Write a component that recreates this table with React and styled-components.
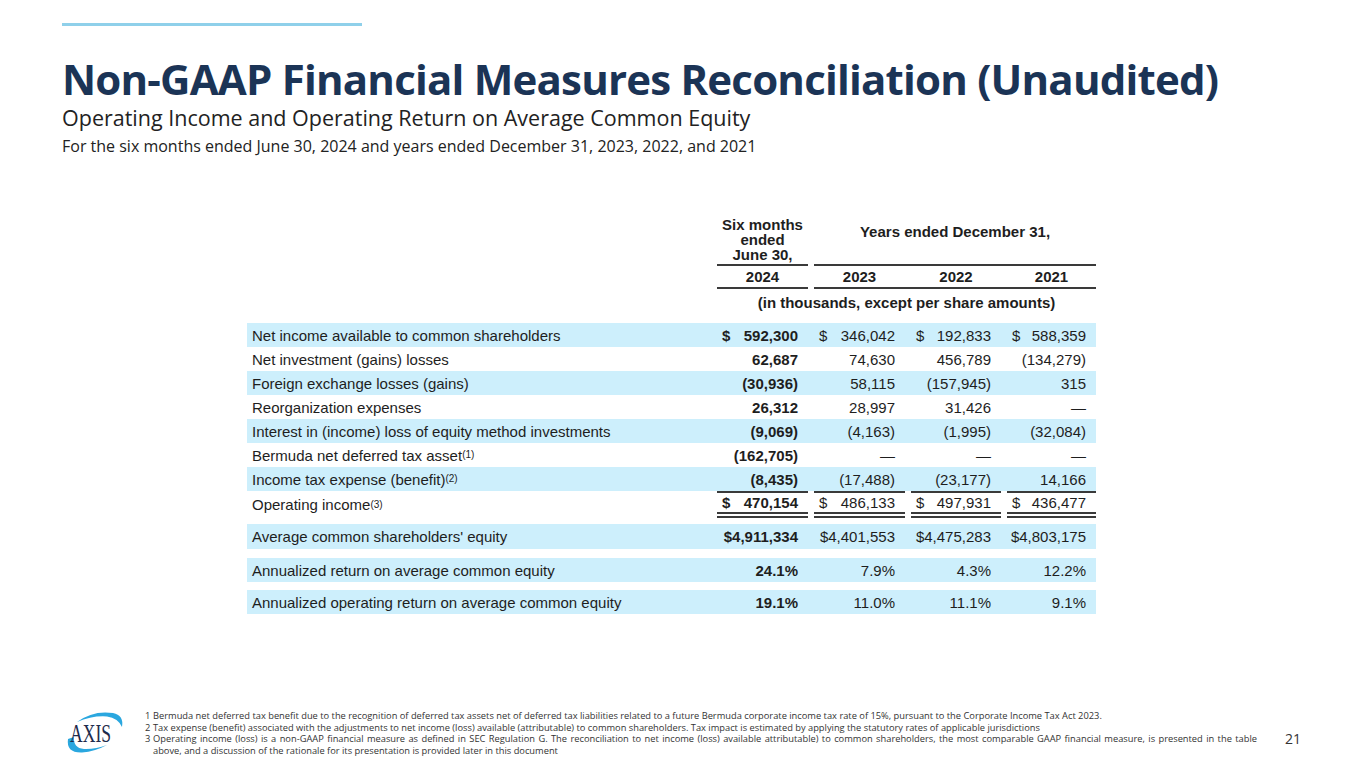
import React from 'react';
import styled, { createGlobalStyle } from 'styled-components';

const color = {
  navy: '#1b3456',
  rule: '#8fd0ea',
  band: '#cdeffc',
  ink: '#1e1e1e',
  line: '#3a3a3a',
  note: '#333333',
  logoBlue: '#2aa7df',
};

const GlobalStyle = createGlobalStyle`
  body {
    margin: 0;
    background: #fff;
  }
`;

const Page = styled.div`
  width: 1365px;
  height: 768px;
  box-sizing: border-box;
  display: flex;
  flex-direction: column;
  padding: 23px 0 0 62px;
  font-family: "Open Sans", "Noto Sans", sans-serif;
  overflow: hidden;
`;

const TopRule = styled.div`
  width: 300px;
  height: 3px;
  background: ${color.rule};
`;

const Title = styled.h1`
  margin: 27px 0 0;
  font-size: 42px;
  line-height: 52px;
  letter-spacing: -0.8px;
  font-weight: 700;
  color: ${color.navy};
  white-space: nowrap;
`;

const Subtitle = styled.h2`
  margin: 0;
  font-size: 21.5px;
  line-height: 25px;
  font-weight: 400;
  color: #222;
`;

const Period = styled.p`
  margin: 5px 0 0;
  font-size: 16px;
  line-height: 22px;
  color: #222;
`;

const cols = '464px 91px 91px 90px 89px';

const Table = styled.div`
  margin: 58px 0 0 185px;
  width: 849px;
  font-family: "Liberation Sans", Arial, sans-serif;
  font-size: 15px;
  color: ${color.ink};
`;

const HeadGrid = styled.div`
  display: grid;
  grid-template-columns: ${cols};
  column-gap: 6px;
  font-weight: 700;
  line-height: 15px;
`;

const HeadCell = styled.div`
  grid-column: ${(p) => p.$span};
  text-align: center;
  display: flex;
  align-items: ${(p) => (p.$top ? 'flex-start' : 'center')};
  justify-content: center;
  border-bottom: ${(p) => (p.$rule ? `2px solid ${color.line}` : 'none')};
  height: ${(p) => p.$h}px;
  box-sizing: border-box;
`;

const Spanned = styled.div`
  padding-top: ${(p) => p.$pad || 0}px;
`;

const YearGroup = styled.div`
  grid-column: 3 / 6;
  display: grid;
  grid-template-columns: 91px 90px 89px;
  column-gap: 6px;
  border-bottom: 2px solid ${color.line};
  height: 23px;
  box-sizing: border-box;
  align-items: center;
  text-align: center;
`;

const Units = styled.div`
  grid-column: 2 / 6;
  text-align: center;
  padding-top: 6px;
  margin-bottom: 13px;
`;

const Row = styled.div`
  display: grid;
  grid-template-columns: ${cols};
  column-gap: 6px;
  height: ${(p) => p.$h || 24}px;
  margin-top: ${(p) => p.$gap || 0}px;
  background: ${(p) => (p.$band ? color.band : 'transparent')};
  align-items: stretch;
`;

const Label = styled.div`
  padding-left: 5px;
  display: flex;
  align-items: center;
  white-space: nowrap;
`;

const Sup = styled.sup`
  font-size: 10px;
  line-height: 0;
  vertical-align: 7px;
`;

const Value = styled.div`
  display: flex;
  align-items: center;
  justify-content: ${(p) => (p.$dollar ? 'space-between' : 'flex-end')};
  padding: 0 10px 0 5px;
  font-weight: ${(p) => (p.$bold ? 700 : 400)};
  white-space: nowrap;
  box-sizing: border-box;
  border-top: ${(p) => (p.$total ? `2px solid ${color.line}` : 'none')};
  border-bottom: ${(p) => (p.$total ? `6px double ${color.line}` : 'none')};
`;

const Footer = styled.footer`
  margin-top: auto;
  display: flex;
  align-items: flex-start;
  padding-bottom: 4px;
`;

const Logo = styled.svg`
  width: 80px;
  height: 60px;
  margin: -6px 0 0 -7px;
  flex: none;
`;

const Notes = styled.ol`
  list-style: none;
  margin: 0 0 0 10px;
  padding: 0;
  font-size: 9.3px;
  line-height: 11.7px;
  color: ${color.note};
  width: 1112px;
  flex: none;
`;

const Note = styled.li`
  display: grid;
  grid-template-columns: 8px 1fr;
`;

const NoteLine = styled.span`
  display: block;
  white-space: nowrap;
  text-align: ${(p) => (p.$justify ? 'justify' : 'left')};
  text-align-last: ${(p) => (p.$justify ? 'justify' : 'auto')};
`;

const PageNum = styled.div`
  margin: 21px 0 0 28px;
  font-size: 14px;
  line-height: 16px;
  color: ${color.note};
`;

const rows = [
  { label: 'Net income available to common shareholders', v: ['592,300', '346,042', '192,833', '588,359'], dollar: true, band: true },
  { label: 'Net investment (gains) losses', v: ['62,687', '74,630', '456,789', '(134,279)'] },
  { label: 'Foreign exchange losses (gains)', v: ['(30,936)', '58,115', '(157,945)', '315'], band: true },
  { label: 'Reorganization expenses', v: ['26,312', '28,997', '31,426', '—'] },
  { label: 'Interest in (income) loss of equity method investments', v: ['(9,069)', '(4,163)', '(1,995)', '(32,084)'], band: true },
  { label: 'Bermuda net deferred tax asset', sup: '(1)', v: ['(162,705)', '—', '—', '—'] },
  { label: 'Income tax expense (benefit)', sup: '(2)', v: ['(8,435)', '(17,488)', '(23,177)', '14,166'], band: true },
];

const ratios = [
  { label: "Average common shareholders' equity", v: ['$4,911,334', '$4,401,553', '$4,475,283', '$4,803,175'], h: 25, gap: 6 },
  { label: 'Annualized return on average common equity', v: ['24.1%', '7.9%', '4.3%', '12.2%'], h: 24, gap: 9 },
  { label: 'Annualized operating return on average common equity', v: ['19.1%', '11.0%', '11.1%', '9.1%'], h: 24, gap: 8 },
];

const Cells = ({ values, dollar, total }) =>
  values.map((val, i) => (
    <Value key={i} $bold={i === 0} $dollar={dollar} $total={total}>
      {dollar && <span>$</span>}
      <span>{val}</span>
    </Value>
  ));

const AxisLogo = () => (
  <Logo viewBox="0 0 80 60">
    <path
      d="M22 18 Q38 6 58 9 Q69 11 67 23 Q63 14 52 12.5 Q37 11.5 22 18 Z"
      fill={color.logoBlue}
    />
    <path
      d="M13 35 Q11 49 27 48.5 Q40 47.5 52 41 Q40 45.5 29 45 Q18 44 19 33 Z"
      fill={color.logoBlue}
    />
    <text
      x="15"
      y="38"
      fontFamily="Liberation Serif, serif"
      fontSize="26"
      fill="#1d2b4c"
      textLength="41"
      lengthAdjust="spacingAndGlyphs"
    >
      AXIS
    </text>
  </Logo>
);

export default function App() {
  return (
    <Page>
      <GlobalStyle />
      <TopRule />
      <Title>Non-GAAP Financial Measures Reconciliation (Unaudited)</Title>
      <Subtitle>Operating Income and Operating Return on Average Common Equity</Subtitle>
      <Period>For the six months ended June 30, 2024 and years ended December 31, 2023, 2022, and 2021</Period>

      <Table>
        <HeadGrid>
          <HeadCell $span="2 / 3" $h={51} $rule>
            <div>Six months<br />ended<br />June 30,</div>
          </HeadCell>
          <HeadCell $span="3 / 6" $h={51} $rule $top>
            <Spanned $pad={9}>Years ended December 31,</Spanned>
          </HeadCell>
          <HeadCell $span="2 / 3" $h={23} $rule>2024</HeadCell>
          <YearGroup>
            <span>2023</span>
            <span>2022</span>
            <span>2021</span>
          </YearGroup>
          <Units>(in thousands, except per share amounts)</Units>
        </HeadGrid>

        {rows.map((r) => (
          <Row key={r.label} $band={r.band}>
            <Label>
              {r.label}
              {r.sup && <Sup>{r.sup}</Sup>}
            </Label>
            <Cells values={r.v} dollar={r.dollar} />
          </Row>
        ))}
        <Row $h={27}>
          <Label>
            Operating income<Sup>(3)</Sup>
          </Label>
          <Cells values={['470,154', '486,133', '497,931', '436,477']} dollar total />
        </Row>

        {ratios.map((r) => (
          <Row key={r.label} $band $h={r.h} $gap={r.gap}>
            <Label>{r.label}</Label>
            <Cells values={r.v} />
          </Row>
        ))}
      </Table>

      <Footer>
        <AxisLogo />
        <Notes>
          <Note>
            <span>1</span>
            <NoteLine>Bermuda net deferred tax benefit due to the recognition of deferred tax assets net of deferred tax liabilities related to a future Bermuda corporate income tax rate of 15%, pursuant to the Corporate Income Tax Act 2023.</NoteLine>
          </Note>
          <Note>
            <span>2</span>
            <NoteLine>Tax expense (benefit) associated with the adjustments to net income (loss) available (attributable) to common shareholders. Tax impact is estimated by applying the statutory rates of applicable jurisdictions</NoteLine>
          </Note>
          <Note>
            <span>3</span>
            <span>
              <NoteLine $justify>
                Operating income (loss) is a non-GAAP financial measure as defined in SEC Regulation G. The reconciliation to net income (loss) available attributable) to common shareholders, the most comparable GAAP financial measure, is presented in the table
              </NoteLine>
              <NoteLine>above, and a discussion of the rationale for its presentation is provided later in this document</NoteLine>
            </span>
          </Note>
        </Notes>
        <PageNum>21</PageNum>
      </Footer>
    </Page>
  );
}
